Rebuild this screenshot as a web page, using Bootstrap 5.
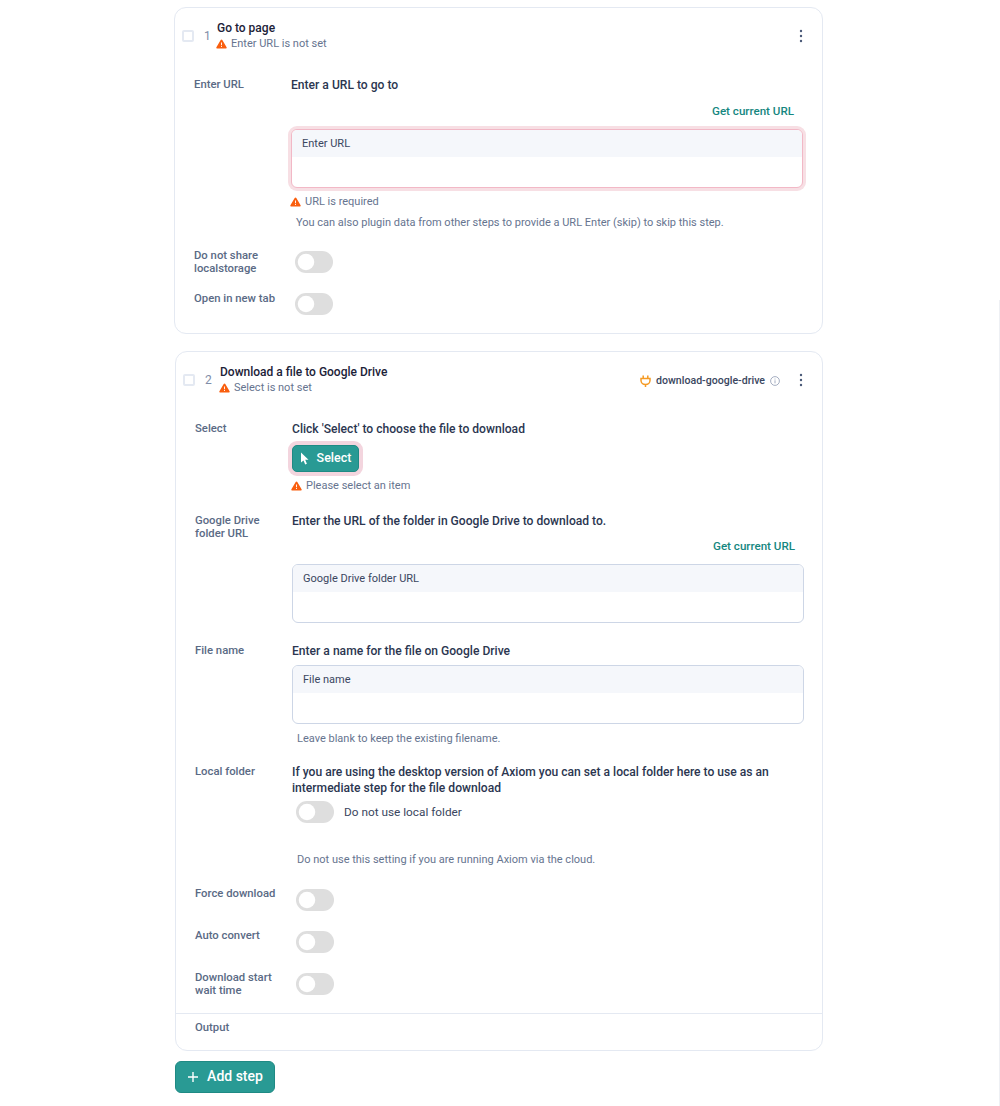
<!doctype html>
<html lang="en">
<head>
<meta charset="utf-8">
<title>Steps</title>
<link href="https://cdn.jsdelivr.net/npm/bootstrap@5.3.0/dist/css/bootstrap.min.css" rel="stylesheet">
<style>
html,body{height:1106px;overflow:hidden}
body{font-family:"Roboto","Noto Sans",sans-serif;font-size:11px;line-height:16px;color:#222b45;background:#fff}
.page{width:1000px;height:1106px}
.rail{margin-top:300px;width:1px;background:#eef0f4;height:806px}
.colm{margin-left:174px;width:649px;padding-top:7px}
.step{width:649px;border:1px solid #e4e9f2;border-radius:12px;--bs-card-bg:#fff;color:#222b45}
.step-b{margin:17px 0 0 1px;width:648px}
.hd{padding:12px 19px 0 7px;margin-bottom:25px;height:44px}
.chk{width:12px;height:12px;margin:10px 10px 0 0;border:2px solid #e4e9f2;border-radius:2px;background:#fff;flex:none}
.num{width:13px;color:#7f8da8;font-size:12px;flex:none;line-height:32px}
.step-b .num{width:15px}
.ttl{font-weight:500;color:#1c2238;font-size:12px}
.sub{color:#66748f;display:flex;align-items:center;gap:4px;line-height:16px;margin-left:-1px}
.warn{width:11px;height:10px;flex:none}
.kebab{width:4px;height:14px;flex:none;margin-top:9px}
.fld{display:flex;padding-left:19px}
.gap-17{margin-top:17px}
.gap-19{margin-top:19px}
.gap-20{margin-top:20px}
.gap-21{margin-top:21px}
.tail{margin-bottom:18px}
.lbl{width:97px;flex:none;margin-top:2px;font-size:11.3px;line-height:12.5px;font-weight:500;color:#5a6a85}
.is-tg .lbl{margin-top:-1px;margin-bottom:-4px}
.lone .lbl{margin-top:0}
.bod{width:512px;flex:none}
.hint{font-weight:500;color:#2b3650;font-size:12.1px}
.getu{color:#16877f;font-weight:500;font-size:11.6px;text-align:right;padding-right:9px;margin-top:10px}
.getu-b{margin-top:9px}
.urlbox{margin-top:10px;border:1px solid #cdd6e6;border-radius:6px;height:59px;overflow:hidden;background:#fff}
.urlbox.tight{margin-top:6px}
.urlbox.bad{border-color:#f2b8c6;box-shadow:0 0 0 3px #f7dfe4}
.band{display:block;height:27px;margin:0;padding:0 10px;line-height:28px;background:#f5f7fb;color:#3a4660}
.urlbox .form-control{border:0;height:30px;border-radius:0;box-shadow:none;background:transparent}
.err{margin-top:6px;color:#66748f;display:flex;align-items:center;gap:4px;margin-left:-1px}
.help{margin-top:5px;padding-left:5px;color:#66748f}
.help.h7{margin-top:7px}
.help.h29{margin-top:29px}
.form-switch.tg{padding:0;margin:0 0 0 4px;min-height:0;height:22px;display:flex;align-items:center;gap:10px;color:#3a4660;font-size:11.8px}
.form-switch.tg.t5{margin-top:5px}
.tg .form-check-input{width:38px;height:22px;margin:0;background-color:#dedede;border:0;box-shadow:none;float:none;background-image:url("data:image/svg+xml,%3csvg xmlns='http://www.w3.org/2000/svg' viewBox='-4 -4 8 8'%3e%3ccircle r='3' fill='%23fff'/%3e%3c/svg%3e")}
.selbtn{--bs-btn-bg:#299a94;--bs-btn-border-color:#1f8a84;--bs-btn-color:#fff;--bs-btn-hover-bg:#299a94;--bs-btn-hover-color:#fff;--bs-btn-hover-border-color:#1f8a84}
.pick{display:flex;align-items:center;justify-content:center;gap:7px;width:67px;height:27px;margin-top:8px;padding:0;border-radius:5px;font-size:12.5px;font-weight:500;box-shadow:0 0 0 4px #f3d5de}
.add{display:flex;align-items:center;justify-content:center;gap:8px;width:100px;height:32px;margin:10px 0 0 1px;padding:0;border-radius:6px;font-size:14px;font-weight:500}
.meta{color:#3a4660;font-weight:500;font-size:10.6px;gap:5px;margin:9px 0 0 auto;height:16px}
.kb2{margin-left:19px}
.rule{border-top:1px solid #e4e9f2;margin:18px 0 0}
.outp{padding:8px 0 15px 19px;font-size:11.3px;line-height:12.5px;font-weight:500;color:#5a6a85}
</style>
</head>
<body>
<svg width="0" height="0" class="d-block position-absolute">
<symbol id="w" viewBox="0 0 12 11"><path d="M6 .6c.4 0 .7.2.9.5l4.7 8c.4.6-.1 1.4-.9 1.4H1.3c-.8 0-1.3-.8-.9-1.4l4.7-8c.2-.3.5-.5.9-.5z" fill="#f95e0e"/><path d="M5.5 3.8h1v3.2h-1zM5.5 7.8h1v1h-1z" fill="#fff"/></symbol>
<symbol id="k" viewBox="0 0 4 14"><circle cx="2" cy="2" r="1.2" fill="#4a5a78"/><circle cx="2" cy="7" r="1.2" fill="#4a5a78"/><circle cx="2" cy="12" r="1.2" fill="#4a5a78"/></symbol>
</svg>
<div class="page d-flex justify-content-between">
<main class="colm">

<section class="card step">
  <div class="hd d-flex">
    <span class="chk"></span><span class="num">1</span>
    <div class="flex-grow-1">
      <div class="ttl">Go to page</div>
      <div class="sub"><svg class="warn"><use href="#w"/></svg>Enter URL is not set</div>
    </div>
    <svg class="kebab ms-auto"><use href="#k"/></svg>
  </div>
  <div class="fld">
    <div class="lbl">Enter URL</div>
    <div class="bod">
      <div class="hint">Enter a URL to go to</div>
      <div class="getu">Get current URL</div>
      <div class="urlbox bad"><label class="band" for="u1">Enter URL</label><input id="u1" class="form-control" type="text"></div>
      <div class="err"><svg class="warn"><use href="#w"/></svg>URL is required</div>
      <div class="help">You can also plugin data from other steps to provide a URL Enter (skip) to skip this step.</div>
    </div>
  </div>
  <div class="fld is-tg gap-20">
    <div class="lbl">Do not share<br>localstorage</div>
    <div class="bod"><div class="form-check form-switch tg"><input class="form-check-input" type="checkbox" role="switch"></div></div>
  </div>
  <div class="fld is-tg lone gap-20 tail">
    <div class="lbl">Open in new tab</div>
    <div class="bod"><div class="form-check form-switch tg"><input class="form-check-input" type="checkbox" role="switch"></div></div>
  </div>
</section>

<section class="card step step-b">
  <div class="hd d-flex">
    <span class="chk"></span><span class="num">2</span>
    <div>
      <div class="ttl">Download a file to Google Drive</div>
      <div class="sub"><svg class="warn"><use href="#w"/></svg>Select is not set</div>
    </div>
    <div class="meta d-flex align-items-center">
      <svg width="11" height="12" viewBox="0 0 11 12" fill="none" stroke="#f59a23" stroke-width="1.5"><path d="M3.2 .5v3M7.8 .5v3M1 3.5h9v2a4.5 4 0 0 1-9 0zM5.5 9.5V12"/></svg>
      <span>download-google-drive</span>
      <svg width="10" height="10" viewBox="0 0 10 10" fill="none" stroke="#8f9bb3" stroke-width=".8"><circle cx="5" cy="5" r="4.4"/><path d="M5 4.3v3M5 2.6v.9"/></svg>
    </div>
    <svg class="kebab kb2"><use href="#k"/></svg>
  </div>
  <div class="fld">
    <div class="lbl">Select</div>
    <div class="bod">
      <div class="hint">Click 'Select' to choose the file to download</div>
      <button type="button" class="btn selbtn pick"><svg width="10" height="13" viewBox="0 0 10 13"><path d="M1 .5v10l2.5-2 1.7 4 1.7-.8-1.7-3.9h3.3z" fill="#fff"/></svg>Select</button>
      <div class="err"><svg class="warn"><use href="#w"/></svg>Please select an item</div>
    </div>
  </div>
  <div class="fld gap-19">
    <div class="lbl">Google Drive<br>folder URL</div>
    <div class="bod">
      <div class="hint">Enter the URL of the folder in Google Drive to download to.</div>
      <div class="getu getu-b">Get current URL</div>
      <div class="urlbox"><label class="band" for="u2">Google Drive folder URL</label><input id="u2" class="form-control" type="text"></div>
    </div>
  </div>
  <div class="fld gap-20">
    <div class="lbl">File name</div>
    <div class="bod">
      <div class="hint">Enter a name for the file on Google Drive</div>
      <div class="urlbox tight"><label class="band" for="u3">File name</label><input id="u3" class="form-control" type="text"></div>
      <div class="help h7">Leave blank to keep the existing filename.</div>
    </div>
  </div>
  <div class="fld gap-17">
    <div class="lbl">Local folder</div>
    <div class="bod">
      <div class="hint">If you are using the desktop version of Axiom you can set a local folder here to use as an intermediate step for the file download</div>
      <div class="form-check form-switch tg t5"><input class="form-check-input" type="checkbox" role="switch"><span>Do not use local folder</span></div>
      <div class="help h29">Do not use this setting if you are running Axiom via the cloud.</div>
    </div>
  </div>
  <div class="fld is-tg gap-21">
    <div class="lbl">Force download</div>
    <div class="bod"><div class="form-check form-switch tg"><input class="form-check-input" type="checkbox" role="switch"></div></div>
  </div>
  <div class="fld is-tg gap-20">
    <div class="lbl">Auto convert</div>
    <div class="bod"><div class="form-check form-switch tg"><input class="form-check-input" type="checkbox" role="switch"></div></div>
  </div>
  <div class="fld is-tg gap-20">
    <div class="lbl">Download start<br>wait time</div>
    <div class="bod"><div class="form-check form-switch tg"><input class="form-check-input" type="checkbox" role="switch"></div></div>
  </div>
  <div class="rule"></div>
  <div class="outp">Output</div>
</section>

<button type="button" class="btn selbtn add"><svg width="12" height="12" viewBox="0 0 12 12" stroke="#fff" stroke-width="1.4"><path d="M6 1v10M1 6h10"/></svg>Add step</button>
</main>
<aside class="rail"></aside>
</div>
<script src="https://cdn.jsdelivr.net/npm/bootstrap@5.3.0/dist/js/bootstrap.bundle.min.js"></script>
</body>
</html>
